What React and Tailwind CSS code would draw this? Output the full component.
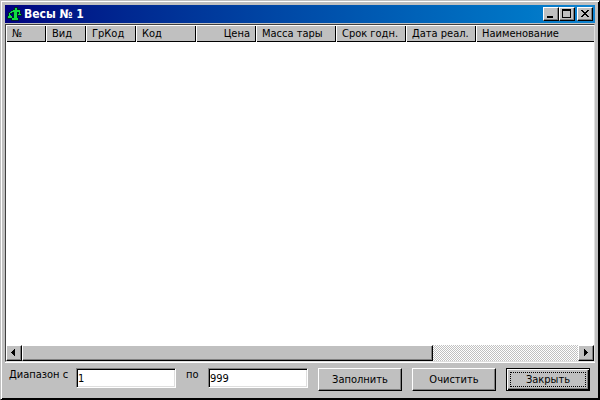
import React, { useState } from "react";

const columns = [
  { title: "№", width: "w-10", align: "text-left" },
  { title: "Вид", width: "w-10", align: "text-left" },
  { title: "ГрКод", width: "w-[50px]", align: "text-left" },
  { title: "Код", width: "w-[60px]", align: "text-left" },
  { title: "Цена", width: "w-[60px]", align: "text-right" },
  { title: "Масса тары", width: "w-20", align: "text-left" },
  { title: "Срок годн.", width: "w-[70px]", align: "text-left" },
  { title: "Дата реал.", width: "w-[70px]", align: "text-left" },
  { title: "Наименование", width: "w-auto", align: "text-left" },
];

// Classic raised 3D edge
const raised =
  "bg-[#c0c0c0] border border-t-white border-l-white border-r-black border-b-black shadow-[inset_-1px_-1px_0_#808080]";

const ScalesIcon = () => (
  <svg className="w-4 h-4" viewBox="0 0 16 16" shapeRendering="crispEdges">
    <path
      d="M8 1h4v2h2v2h1v3h1v2h-4v2h1v3H5v-3h2V8H5v2h2v3H1v-3h1V6h3V4h2V3h1z"
      fill="#002030"
    />
    <path
      d="M9 2h2v2h3v2h-3v6h1v2H6v-2h2V6H6v1H4v2h1v1h1v2H2v-2h1V7h1V6h1V5h2V4h2z M13 6h1v2h1v1h-3V8h1z"
      fill="#10e040"
    />
  </svg>
);

const CaptionButton = ({ label, children }) => (
  <button
    type="button"
    aria-label={label}
    className={`w-4 h-3.5 flex items-center justify-center ${raised}`}
  >
    <svg className="w-3 h-3 shrink-0" viewBox="0 0 12 12" shapeRendering="crispEdges">
      {children}
    </svg>
  </button>
);

const ScrollButton = ({ label, path }) => (
  <button
    type="button"
    aria-label={label}
    className={`w-4 h-4 shrink-0 flex items-center justify-center ${raised}`}
  >
    <svg className="w-2 h-2 shrink-0" viewBox="0 0 8 8" shapeRendering="crispEdges">
      <path d={path} />
    </svg>
  </button>
);

const RangeInput = ({ id, value, onChange }) => (
  <input
    id={id}
    type="text"
    value={value}
    onChange={(e) => onChange(e.target.value)}
    className="w-[100px] h-5 px-px bg-white border border-t-[#808080] border-l-[#808080] border-r-white border-b-white shadow-[inset_1px_1px_0_#000,inset_-1px_-1px_0_#dfdfdf] outline-none"
  />
);

const App = () => {
  const [from, setFrom] = useState("1");
  const [to, setTo] = useState("999");

  return (
    <div className="h-screen flex flex-col bg-[#c0c0c0] pt-1 pl-1 pr-1 pb-1 border border-t-[#c0c0c0] border-l-[#c0c0c0] border-r-black border-b-black shadow-[inset_1px_1px_0_#fff,inset_-1px_-1px_0_#000] font-['DejaVu_Sans_Condensed','Noto_Sans',sans-serif] text-[11px] leading-[14px] text-black">
      <header className="h-[18px] shrink-0 flex items-center pl-px pr-0.5 bg-linear-to-r from-[#000080] to-[#1084d0]">
        <ScalesIcon />
        <h1 className="ml-0.5 grow text-xs font-bold text-white">Весы № 1</h1>
        <div className="flex">
          <CaptionButton label="Свернуть">
            <path d="M2 8h6v2H2z" />
          </CaptionButton>
          <CaptionButton label="Развернуть">
            <path d="M1 1h9v9H1z M2 3v6h7V3z" fillRule="evenodd" />
          </CaptionButton>
        </div>
        <div className="ml-0.5 flex">
          <CaptionButton label="Закрыть окно">
            <path d="M2 2h2v1h1v1h2v-1h1v-1h2v1h-1v1h-1v1h-1v1h1v1h1v1h1v1h-2v-1h-1v-1h-2v1h-1v1h-2v-1h1v-1h1v-1h1v-1h-1v-1h-1v-1h-1z" />
          </CaptionButton>
        </div>
      </header>

      <main className="grow min-h-0 mt-px flex flex-col bg-white border border-t-[#404040] border-l-[#404040] border-r-[#dfdfdf] border-b-[#dfdfdf]">
        <table className="w-full table-fixed border-collapse">
          <thead>
            <tr>
              {columns.map((col) => (
                <th
                  key={col.title}
                  scope="col"
                  className={`${col.width} ${col.align} h-[17px] px-1.5 py-0 font-normal whitespace-nowrap bg-[#c0c0c0] shadow-[inset_1px_1px_0_#fff,inset_-1px_-1px_0_#000] last:shadow-[inset_1px_1px_0_#fff,inset_0_-1px_0_#000]`}
                >
                  {col.title}
                </th>
              ))}
            </tr>
          </thead>
        </table>
        <div className="grow" />
        <div className="h-4 shrink-0 flex bg-[repeating-conic-gradient(#c0c0c0_0_25%,#fff_0_50%)] bg-size-[2px_2px]">
          <ScrollButton label="Влево" path="M5 0v7h-1v-1h-1v-1h-1v-1h-1v-1h1v-1h1v-1h1v-1z" />
          <div className="grow flex">
            <div className={`w-[74%] ${raised}`} />
          </div>
          <ScrollButton label="Вправо" path="M2 0v7h1v-1h1v-1h1v-1h1v-1h-1v-1h-1v-1h-1v-1z" />
        </div>
      </main>

      <form
        className="shrink-0 pt-[5px] pl-1 pr-[5px] pb-1 flex items-start border-t border-white"
        onSubmit={(e) => e.preventDefault()}
      >
        <label htmlFor="from" className="w-[67px]">
          Диапазон с
        </label>
        <RangeInput id="from" value={from} onChange={setFrom} />
        <label htmlFor="to" className="w-8 pl-2.5">
          по
        </label>
        <RangeInput id="to" value={to} onChange={setTo} />
        <div className="grow flex justify-end gap-2.5">
          <button type="submit" className={`w-[84px] h-[23px] ${raised}`}>
            Заполнить
          </button>
          <button
            type="button"
            className={`w-[84px] h-[23px] ${raised}`}
            onClick={() => {
              setFrom("");
              setTo("");
            }}
          >
            Очистить
          </button>
          <button
            type="button"
            className="w-[84px] h-[23px] p-[3px] flex bg-[#c0c0c0] border border-black shadow-[inset_1px_1px_0_#fff,inset_-1px_-1px_0_#000,inset_-2px_-2px_0_#808080]"
          >
            <span className="grow h-full flex items-center justify-center border border-dotted border-black">
              Закрыть
            </span>
          </button>
        </div>
      </form>
    </div>
  );
};

export default App;
